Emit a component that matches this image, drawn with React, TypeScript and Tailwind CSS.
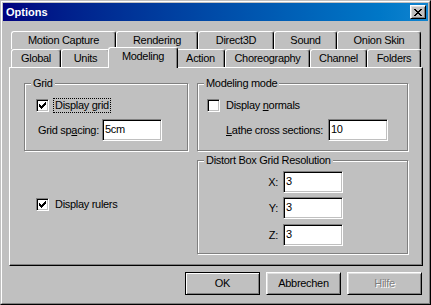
import type { ReactNode } from 'react'

const CHECK = ['......x', '.....xx', 'x...xxx', 'xx.xxx.', 'xxxxx..', '.xxx...', '..x....']
const CLOSE_X = ['xx....xx', '.xx..xx.', '..xxxx..', '...xx...', '..xxxx..', '.xx..xx.', 'xx....xx']

function PixelGlyph({ rows }: { rows: string[] }) {
  const w = rows[0].length
  const h = rows.length
  return (
    <svg width={w} height={h} viewBox={`0 0 ${w} ${h}`} shapeRendering="crispEdges">
      {rows.flatMap((row, y) =>
        row.split('').map((c, x) => (c === 'x' ? <rect key={`${x}-${y}`} x={x} y={y} width={1} height={1} fill="#000" /> : null))
      )}
    </svg>
  )
}

const SUNKEN =
  'bg-white border border-t-[#808080] border-l-[#808080] border-b-white border-r-white shadow-[inset_1px_1px_0_#000,inset_-1px_-1px_0_#c0c0c0]'
const RAISED =
  'border border-t-white border-l-white border-b-black border-r-black shadow-[inset_1px_1px_0_#dfdfdf,inset_-1px_-1px_0_#808080]'

function Checkbox({ checked }: { checked?: boolean }) {
  return (
    <div className={`w-[13px] h-[13px] shrink-0 flex items-center justify-center ${SUNKEN}`}>
      {checked && <PixelGlyph rows={CHECK} />}
    </div>
  )
}

function CheckRow({ checked, focused, children, className = '' }: { checked?: boolean; focused?: boolean; children: ReactNode; className?: string }) {
  return (
    <div className={`flex items-center h-[15px] ${className}`}>
      <Checkbox checked={checked} />
      <span className={`ml-[4px] px-[1px] border whitespace-nowrap ${focused ? 'border-dotted border-black' : 'border-transparent'}`}>
        {children}
      </span>
    </div>
  )
}

function Edit({ value }: { value: string }) {
  return <div className={`w-[60px] h-[22px] shrink-0 pl-[2px] pt-[3px] ${SUNKEN}`}>{value}</div>
}

function Group({ title, className = '', children }: { title: string; className?: string; children: ReactNode }) {
  return (
    <div className={`relative border border-[#808080] shadow-[inset_1px_1px_0_#fff,1px_1px_0_#fff] ${className}`}>
      <span className="absolute left-[6px] -top-[7px] px-[2px] bg-[#c0c0c0] whitespace-nowrap">{title}</span>
      {children}
    </div>
  )
}

function Tab({ label, w, selected }: { label: string; w: string; selected?: boolean }) {
  return (
    <div
      className={`${w} ${
        selected ? 'relative z-10 -mx-[2px] -mb-px h-[21px]' : 'h-[18px]'
      } flex justify-center pt-[2px] bg-[#c0c0c0] border-l border-t border-r border-l-white border-t-white border-r-black rounded-t-[3px] shadow-[inset_-1px_0_0_#808080] whitespace-nowrap`}
    >
      {label}
    </div>
  )
}

const TOP_TABS: [string, string][] = [
  ['Motion Capture', 'w-[105px]'],
  ['Rendering', 'w-[82px]'],
  ['Direct3D', 'w-[76px]'],
  ['Sound', 'w-[63px]'],
  ['Onion Skin', 'w-[84px]'],
]

const FRONT_TABS: [string, string][] = [
  ['Global', 'w-[50px]'],
  ['Units', 'w-[49px]'],
  ['Modeling', 'w-[70px]'],
  ['Action', 'w-[49px]'],
  ['Choreography', 'w-[85px]'],
  ['Channel', 'w-[57px]'],
  ['Folders', 'w-[54px]'],
]

function Button({ children, isDefault, disabled }: { children: ReactNode; isDefault?: boolean; disabled?: boolean }) {
  const frame = isDefault
    ? 'border border-black shadow-[inset_1px_1px_0_#fff,inset_-1px_-1px_0_#808080]'
    : RAISED
  return (
    <div
      className={`w-[75px] h-[23px] flex items-center justify-center ${frame} ${
        disabled ? 'text-[#808080] [text-shadow:1px_1px_0_#fff]' : ''
      }`}
    >
      {children}
    </div>
  )
}

export default function App() {
  return (
    <div className="w-[431px] h-[305px] bg-[#c0c0c0] border border-t-[#c0c0c0] border-l-[#c0c0c0] border-r-black border-b-black font-['Liberation_Sans',Arial,sans-serif] text-[11px] leading-[13px] tracking-[-0.3px] text-black select-none">
      <div className="h-full border border-t-white border-l-white border-r-[#808080] border-b-[#808080] p-[1px]">
        {/* title bar */}
        <div className="h-[18px] flex items-center justify-between bg-linear-to-r from-[#000080] to-[#1084d0]">
          <span className="pl-[3px] font-bold text-white tracking-normal">Options</span>
          <div className={`mr-[2px] w-[16px] h-[14px] bg-[#c0c0c0] flex items-center justify-center ${RAISED}`}>
            <PixelGlyph rows={CLOSE_X} />
          </div>
        </div>

        <div className="pl-[6px] mt-[10px] w-[420px]">
          {/* tabs */}
          <div className="flex items-end h-[18px] mx-[2px]">
            {TOP_TABS.map(([l, w]) => (
              <Tab key={l} label={l} w={w} />
            ))}
          </div>
          <div className="flex items-end h-[18px] mx-[2px]">
            {FRONT_TABS.map(([l, w]) => (
              <Tab key={l} label={l} w={w} selected={l === 'Modeling'} />
            ))}
          </div>

          {/* page */}
          <div className="w-[414px] h-[199px] flex gap-[9px] pt-[15px] pl-[14px] border border-t-white border-l-white border-r-black border-b-black shadow-[inset_-1px_-1px_0_#808080]">
            <div className="flex flex-col w-[164px]">
              <Group title="Grid" className="h-[68px] pt-[14px] pl-[11px]">
                <CheckRow checked focused>
                  Display <span className="underline">g</span>rid
                </CheckRow>
                <div className="flex items-center mt-[6px]">
                  <span className="ml-[2px] w-[64px] whitespace-nowrap">
                    Grid sp<span className="underline">a</span>cing:
                  </span>
                  <Edit value="5cm" />
                </div>
              </Group>
              <CheckRow checked className="mt-[46px] ml-[12px]">
                Display rulers
              </CheckRow>
            </div>

            <div className="flex flex-col w-[211px]">
              <Group title="Modeling mode" className="h-[68px] pt-[14px] pl-[9px]">
                <CheckRow>
                  Display <span className="underline">n</span>ormals
                </CheckRow>
                <div className="flex items-center mt-[6px]">
                  <span className="ml-[19px] w-[102px] whitespace-nowrap">
                    <span className="underline">L</span>athe cross sections:
                  </span>
                  <Edit value="10" />
                </div>
              </Group>
              <Group title="Distort Box Grid Resolution" className="mt-[9px] h-[94px] pt-[10px] pl-[65px]">
                {[
                  ['X:', ''],
                  ['Y:', 'mt-[4px]'],
                  ['Z:', 'mt-[5px]'],
                ].map(([l, m]) => (
                  <div key={l} className={`flex items-center ${m}`}>
                    <span className="w-[20px] pr-[5px] text-right">{l}</span>
                    <Edit value="3" />
                  </div>
                ))}
              </Group>
            </div>
          </div>

          {/* buttons */}
          <div className="flex justify-end gap-[6px] mt-[6px] w-[414px] pr-[1px]">
            <Button isDefault>OK</Button>
            <Button>Abbrechen</Button>
            <Button disabled>Hilfe</Button>
          </div>
        </div>
      </div>
    </div>
  )
}
